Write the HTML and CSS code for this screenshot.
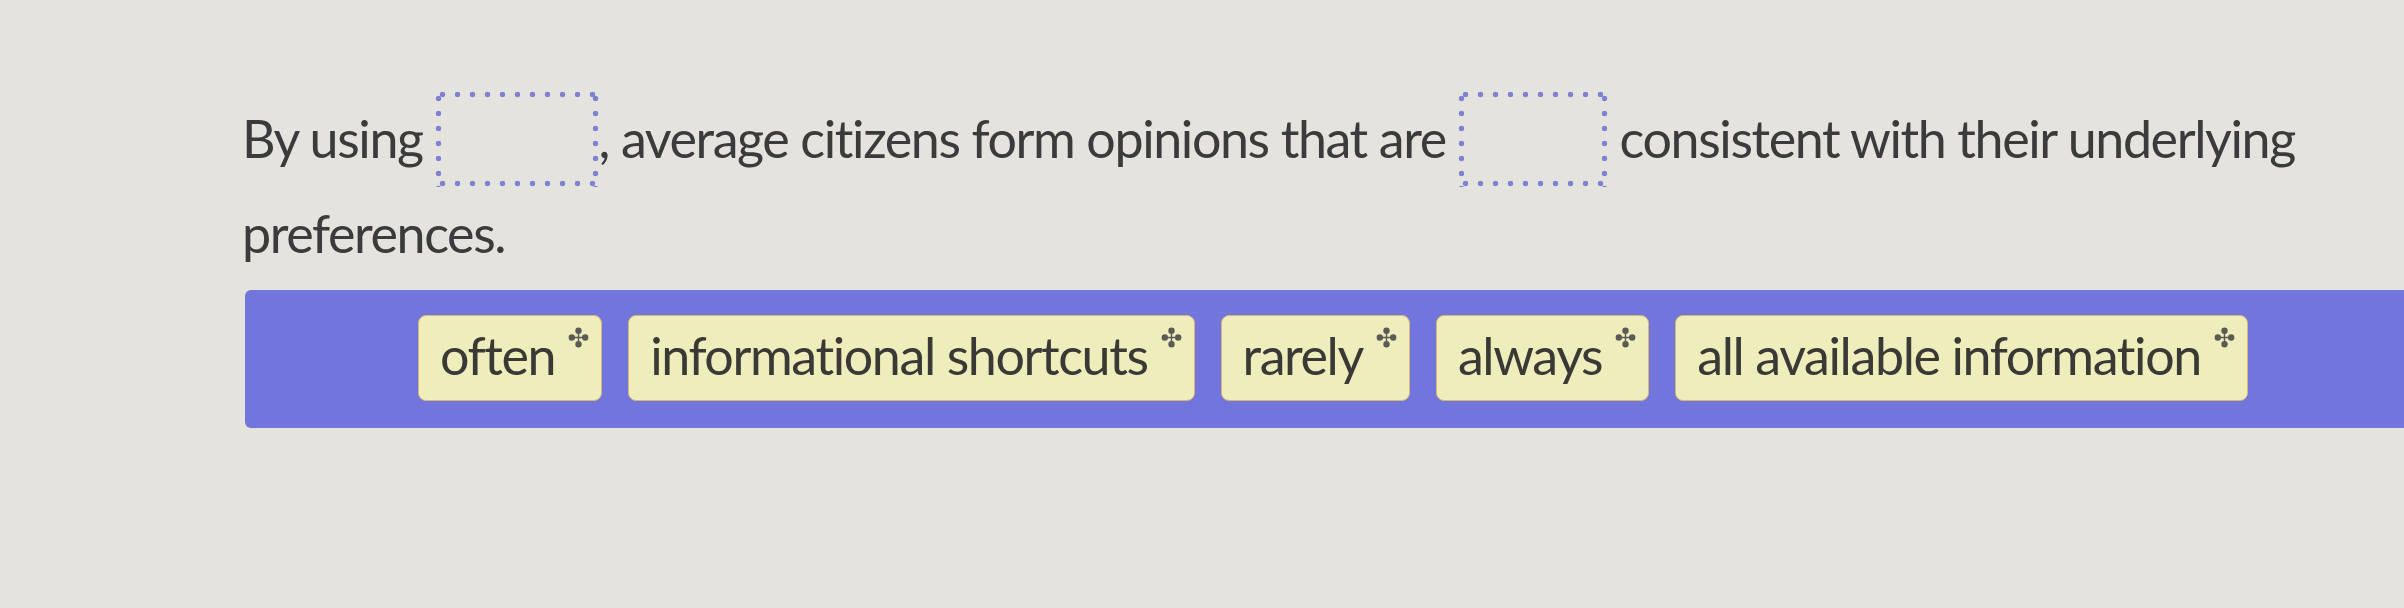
FILE: index.html
```html
<!DOCTYPE html>
<html lang="en">
<head>
<meta charset="utf-8">
<title>Fill in the blanks</title>
<link rel="stylesheet" href="styles.css">
</head>
<body>
<main class="question">
  <p class="sentence">By using <span class="blank blank-wide"></span>, average citizens form opinions that are <span class="blank blank-narrow"></span> consistent with their underlying preferences.</p>
  <div class="bank">
    <div class="chip">often<svg class="grip" viewBox="0 0 22 22" aria-hidden="true"><path d="M11 3v16M3 11h16" /><circle cx="11" cy="4" r="2.6"/><circle cx="11" cy="18" r="2.6"/><circle cx="4" cy="11" r="2.6"/><circle cx="18" cy="11" r="2.6"/></svg></div>
    <div class="chip">informational shortcuts<svg class="grip" viewBox="0 0 22 22" aria-hidden="true"><path d="M11 3v16M3 11h16" /><circle cx="11" cy="4" r="2.6"/><circle cx="11" cy="18" r="2.6"/><circle cx="4" cy="11" r="2.6"/><circle cx="18" cy="11" r="2.6"/></svg></div>
    <div class="chip">rarely<svg class="grip" viewBox="0 0 22 22" aria-hidden="true"><path d="M11 3v16M3 11h16" /><circle cx="11" cy="4" r="2.6"/><circle cx="11" cy="18" r="2.6"/><circle cx="4" cy="11" r="2.6"/><circle cx="18" cy="11" r="2.6"/></svg></div>
    <div class="chip">always<svg class="grip" viewBox="0 0 22 22" aria-hidden="true"><path d="M11 3v16M3 11h16" /><circle cx="11" cy="4" r="2.6"/><circle cx="11" cy="18" r="2.6"/><circle cx="4" cy="11" r="2.6"/><circle cx="18" cy="11" r="2.6"/></svg></div>
    <div class="chip">all available information<svg class="grip" viewBox="0 0 22 22" aria-hidden="true"><path d="M11 3v16M3 11h16" /><circle cx="11" cy="4" r="2.6"/><circle cx="11" cy="18" r="2.6"/><circle cx="4" cy="11" r="2.6"/><circle cx="18" cy="11" r="2.6"/></svg></div>
  </div>
</main>
</body>
</html>
```
FILE: styles.css
```css
html, body {
  margin: 0;
  padding: 0;
}
body {
  background: #e5e3de;
  font-family: "Lato", "Liberation Sans", sans-serif;
  font-variant-ligatures: none;
  color: #3b3a3c;
  width: 2404px;
  height: 608px;
  overflow: hidden;
}
.question {
  padding: 91px 0 0 242px;
}
.sentence {
  margin: 0;
  font-size: 52px;
  letter-spacing: -1.4px;
  line-height: 92px;
  width: 2100px;
}
.blank {
  display: inline-block;
  height: 96px;
  vertical-align: -29px;
  box-sizing: border-box;
  background:
    radial-gradient(circle, #7f82d2 2.5px, transparent 3.1px) 0 0 / 15px 7px repeat-x,
    radial-gradient(circle, #7f82d2 2.5px, transparent 3.1px) 0 100% / 15px 7px repeat-x,
    radial-gradient(circle, #7f82d2 2.5px, transparent 3.1px) 0 0 / 7px 15px repeat-y,
    radial-gradient(circle, #7f82d2 2.5px, transparent 3.1px) 100% 0 / 7px 15px repeat-y;
}
.blank-wide {
  width: 164px;
}
.blank-narrow {
  width: 150px;
}
.bank {
  margin-top: 11px;
  margin-left: 3px;
  margin-right: -30px;
  background: #7276dc;
  border-radius: 6px;
  height: 138px;
  box-sizing: border-box;
  padding: 25px 0 0 173px;
  display: flex;
  align-items: flex-start;
  gap: 26px;
}
.chip {
  position: relative;
  display: flex;
  align-items: center;
  height: 86px;
  box-sizing: border-box;
  padding: 0 46px 6px 21px;
  background: #efedbc;
  border: 1.5px solid #d6b872;
  border-radius: 8px;
  font-size: 52px;
  letter-spacing: -1.4px;
  color: #3a3936;
  white-space: nowrap;
}
.grip {
  position: absolute;
  top: 11px;
  right: 12px;
  width: 21px;
  height: 21px;
  stroke: #5c5a55;
  stroke-width: 1.5;
  fill: #5c5a55;
}
```
